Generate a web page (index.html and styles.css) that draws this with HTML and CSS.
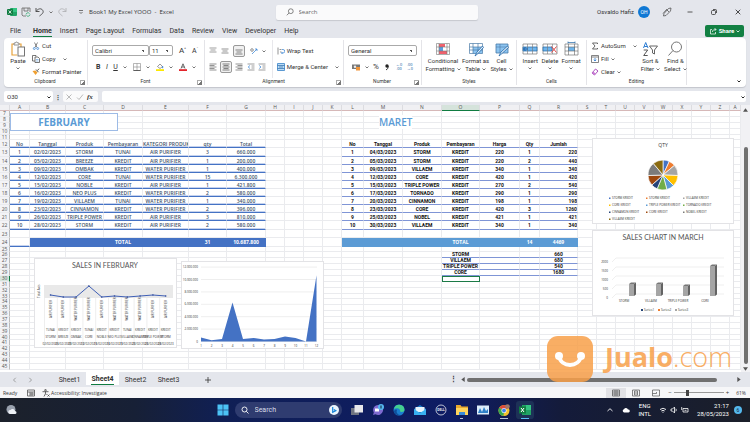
FILE: index.html
```html
<!DOCTYPE html>
<html lang="en">
<head>
<meta charset="utf-8">
<title>Book1 My Excel YOOO - Excel</title>
<link rel="stylesheet" href="styles.css">
</head>
<body>
<header class="titlebar">
  <div class="quick">
    <svg class="i10" viewBox="0 0 10 10"><rect x="3" y="1" width="7" height="8" rx="1" fill="#21a366"/><path d="M6 1h4v4H6z" fill="#33c481"/><rect y="2" width="6" height="6" rx="1" fill="#107c41"/><path d="M1.700 3.500l2.600 3M4.300 3.500l-2.600 3" stroke="#fff" stroke-width=".8"/></svg>
    <button class="icon" aria-label="Save"><svg class="i10" viewBox="0 0 10 10" fill="none" stroke="#666" stroke-width=".8"><path d="M5 9H2L1 8V1h8v4M3 1v3h4V1"/><path d="M5 7.500a2 2 0 0 1 3.500-1M9 7.500a2 2 0 0 1-3.500 1" stroke="#21a366"/></svg></button>
    <button class="icon" aria-label="Undo"><svg class="i10" viewBox="0 0 10 10" fill="none" stroke="#444" stroke-width=".9"><path d="M1 1v3.500h3.500M1 4.500C3 1.500 6 1 7.500 3s.5 3.500-3 6"/></svg></button>
    <svg class="chev" viewBox="0 0 4 4"><path d="M.5 1.500L2 3l1.500-1.500"/></svg>
    <button class="icon faded" aria-label="Redo"><svg class="i10" viewBox="0 0 10 10" fill="none" stroke="#777" stroke-width=".8"><path d="M9 1v3.500H5.500M9 4.500C7 1.500 4 1 2.500 3s-.5 3.500 3 6"/></svg></button>
    <button class="icon more" aria-label="Customize toolbar"><svg class="chev" viewBox="0 0 4 4"><path d="M0 .5h4M.5 2L2 3.500 3.500 2"/></svg></button>
    <span class="doc">Book1 My Excel YOOO&nbsp; -&nbsp; Excel</span>
  </div>
  <label class="search"><svg class="i8" viewBox="0 0 8 8" fill="none" stroke="#555" stroke-width=".7"><circle cx="4.800" cy="3.200" r="2.400"/><path d="M3 5L.8 7.300"/></svg><input type="text" placeholder="Search" aria-label="Search"></label>
  <div class="user">
    <span>Osvaldo Hafiz</span><span class="avatar">OH</span>
    <button class="icon" aria-label="Pen"><svg class="i10" viewBox="0 0 10 10" fill="none" stroke="#444" stroke-width=".7"><path d="M6.500 1.500L9 1 8.500 4 4 8.500l-2.500.5.500-2.500zM5 3l2 2M1 6.500L5 2"/></svg></button>
    <button class="icon" aria-label="Minimize"><svg class="i8" viewBox="0 0 8 8" stroke="#333" stroke-width=".8"><path d="M1.500 4h5"/></svg></button>
    <button class="icon" aria-label="Restore"><svg class="i8" viewBox="0 0 8 8" fill="none" stroke="#333" stroke-width=".8"><rect x="1.500" y="2.500" width="4" height="4" rx="1"/><path d="M3 1.500h2.500a1 1 0 0 1 1 1V5"/></svg></button>
    <button class="icon" aria-label="Close"><svg class="i8" viewBox="0 0 8 8" stroke="#222" stroke-width=".8"><path d="M1.700 1.700l4.600 4.600M6.300 1.700L1.700 6.300"/></svg></button>
  </div>
</header>

<nav class="tabs">
  <button>File</button><button class="on">Home</button><button>Insert</button><button>Page Layout</button><button>Formulas</button><button>Data</button><button>Review</button><button>View</button><button>Developer</button><button>Help</button>
  <button class="share"><svg class="i8" viewBox="0 0 8 8" fill="none" stroke="#fff" stroke-width=".7"><path d="M3 2.500H1.500v4.500h5V5M3.500 5c0-2 1-2.500 3.500-2.500M5.500 1L7 2.500 5.500 4"/></svg>Share <svg class="chev light" viewBox="0 0 4 4"><path d="M.5 1.500L2 3l1.500-1.500"/></svg></button>
</nav>

<section class="ribbon">
  <div class="group g-clip">
    <div class="body">
      <button class="big"><svg class="i16" viewBox="0 0 16 16" fill="none"><path d="M4 3H2v11h5M9 3h2v3" stroke="#e8a33d" stroke-width="1.200"/><path d="M4 4V2h1.500a1 1 0 0 1 2 0H9v2z" fill="#fff" stroke="#777" stroke-width=".8"/><rect x="8" y="6" width="6.500" height="9" fill="#fff" stroke="#666" stroke-width=".9"/></svg><span>Paste</span><svg class="chev" viewBox="0 0 4 4"><path d="M.5 1.500L2 3l1.500-1.500"/></svg></button>
      <div class="stack">
        <button class="row"><svg class="i8" viewBox="0 0 8 8" fill="none" stroke="#555" stroke-width=".7"><path d="M2.500.5L5 5.500M5.500.5L3 5.500"/><circle cx="2.300" cy="6.500" r="1" stroke="#2b7cd3"/><circle cx="5.700" cy="6.500" r="1" stroke="#2b7cd3"/></svg>Cut</button>
        <button class="row"><svg class="i8" viewBox="0 0 8 8" fill="none" stroke="#555" stroke-width=".8"><path d="M3 6H.5V.5H4v1M3 2h3l1.500 1.500v4H3z"/><path d="M4 4.500h2.500M4 6h2.500" stroke="#2b7cd3" stroke-width=".5"/></svg>Copy<svg class="chev pad" viewBox="0 0 4 4"><path d="M.5 1.500L2 3l1.500-1.500"/></svg></button>
        <button class="row"><svg class="i8" viewBox="0 0 8 8"><path d="M.5 3l3 4 2-2.500-2-2z" fill="#f0a030"/><path d="M4 1.500l2.500 2.700M5.500 2.500L7 .7" stroke="#555" stroke-width="1" fill="none"/></svg>Format Painter</button>
      </div>
    </div>
    <div class="label launch">Clipboard</div>
  </div>
  <div class="group g-font">
    <div class="body lines">
      <div class="line">
        <select class="w-font" aria-label="Font"><option>Calibri</option></select><select class="w-size" aria-label="Font size"><option>11</option></select>
        <button class="icon big-a">A<sup>^</sup></button><button class="icon small-a">A<sup>ˇ</sup></button>
      </div>
      <div class="line spread">
        <button class="icon fmt"><b>B</b></button><button class="icon fmt"><i>I</i></button><button class="icon fmt"><u>U</u></button><svg class="chev" viewBox="0 0 4 4"><path d="M.5 1.500L2 3l1.500-1.500"/></svg>
        <button class="icon" aria-label="Borders"><svg class="i8" viewBox="0 0 8 8" fill="none" stroke="#888" stroke-width=".6"><path d="M.5.5h7v7h-7zM4 .5v7M.5 4h7"/><path d="M.5 7.500h7" stroke="#222"/></svg></button><svg class="chev" viewBox="0 0 4 4"><path d="M.5 1.500L2 3l1.500-1.500"/></svg>
        <button class="icon" aria-label="Fill color"><svg class="i8" viewBox="0 0 8 8"><path d="M1.500 3.500L4 1l2.500 2.500-2.500 2z" fill="#fff" stroke="#555" stroke-width=".6"/><path d="M6.700 3.200v2" stroke="#2b7cd3"/><path d="M0 6.200h8V8H0z" fill="#fde900"/></svg></button><svg class="chev" viewBox="0 0 4 4"><path d="M.5 1.500L2 3l1.500-1.500"/></svg>
        <button class="icon" aria-label="Font color"><svg class="i8" viewBox="0 0 8 8"><path d="M2 5.500L4 .8l2 4.700M2.700 4h2.600" fill="none" stroke="#444" stroke-width=".8"/><path d="M0 6.200h8V8H0z" fill="#e3242b"/></svg></button><svg class="chev" viewBox="0 0 4 4"><path d="M.5 1.500L2 3l1.500-1.500"/></svg>
      </div>
    </div>
    <div class="label launch">Font</div>
  </div>
  <div class="group g-align">
    <div class="body">
      <div class="lines cols">
        <div class="line spread">
          <button class="icon" aria-label="Top align"><svg class="i8" viewBox="0 0 8 8" stroke="#777" stroke-width=".7"><path d="M.5 1h7M1.500 3h5M.5 5h7"/></svg></button>
          <button class="icon" aria-label="Middle align"><svg class="i8" viewBox="0 0 8 8" stroke="#666" stroke-width=".7"><path d="M.5 2h7M1.500 4h5M.5 6h7"/></svg></button>
          <button class="icon sel" aria-label="Bottom align"><svg class="i8" viewBox="0 0 8 8" stroke="#555" stroke-width=".7"><path d="M.5 3h7M1.500 5h5M.5 7h7"/></svg></button>
          <button class="icon" aria-label="Orientation"><svg class="i8" viewBox="0 0 8 8" fill="none" stroke="#666" stroke-width=".7"><circle cx="2" cy="3" r="1.300"/><path d="M2 7l5-5M7 4V2H5" stroke="#2b7cd3"/></svg></button>
          <svg class="chev" viewBox="0 0 4 4"><path d="M.5 1.500L2 3l1.500-1.500"/></svg>
        </div>
        <div class="line spread">
          <button class="icon" aria-label="Align left"><svg class="i8" viewBox="0 0 8 8" stroke="#666" stroke-width=".7"><path d="M.5 1h7M.5 2.500h5M.5 4h7M.5 5.500h5M.5 7h7"/></svg></button>
          <button class="icon sel" aria-label="Center"><svg class="i8" viewBox="0 0 8 8" stroke="#555" stroke-width=".7"><path d="M.5 1h7M1.500 2.500h5M.5 4h7M1.500 5.500h5M.5 7h7"/></svg></button>
          <button class="icon" aria-label="Align right"><svg class="i8" viewBox="0 0 8 8" stroke="#666" stroke-width=".7"><path d="M.5 1h7M2.500 2.500h5M.5 4h7M2.500 5.500h5M.5 7h7"/></svg></button>
          <button class="icon" aria-label="Decrease indent"><svg class="i8" viewBox="0 0 8 8" fill="none" stroke="#777" stroke-width=".7"><path d="M.5 1h7M4.500 3h3M4.500 5h3M.5 7h7"/><path d="M3 2.500L1.200 4 3 5.500" stroke="#2b7cd3"/></svg></button>
          <button class="icon" aria-label="Increase indent"><svg class="i8" viewBox="0 0 8 8" fill="none" stroke="#777" stroke-width=".7"><path d="M.5 1h7M4.500 3h3M4.500 5h3M.5 7h7"/><path d="M1.200 2.500L3 4 1.200 5.500" stroke="#2b7cd3"/></svg></button>
        </div>
      </div>
      <div class="lines wrapcol">
        <button class="row"><svg class="i8" viewBox="0 0 8 8" fill="none" stroke="#666" stroke-width=".7"><path d="M1 .5v7M2.500 2.500h2M3 5h1.500"/><path d="M5 2.500h1a1.500 1.500 0 0 1 0 3.500H4.500M5.500 5l-1 1 1 1" stroke="#2b7cd3"/></svg>Wrap Text</button>
        <button class="row"><svg class="i8" viewBox="0 0 8 8" fill="none"><path d="M.5.5h7v7h-7z" fill="#bcdcf5" stroke="#3a83c8" stroke-width=".8"/><path d="M.5 2.500h7M.5 5.500h7M2 4h4" stroke="#2b6cab" stroke-width=".7"/></svg>Merge &amp; Center<svg class="chev pad" viewBox="0 0 4 4"><path d="M.5 1.500L2 3l1.500-1.500"/></svg></button>
      </div>
    </div>
    <div class="label launch">Alignment</div>
  </div>
  <div class="group g-num">
    <div class="body lines">
      <div class="line"><select class="w-num" aria-label="Number format"><option>General</option></select></div>
      <div class="line spread">
        <button class="icon" aria-label="Accounting"><svg class="i8" viewBox="0 0 8 8"><path d="M0 1.500h8v4.500H0z" fill="#777"/><circle cx="3" cy="3.700" r="1.200" fill="#eee"/><path d="M4 4h4v3.500H4z" fill="#f0953a"/></svg></button><svg class="chev" viewBox="0 0 4 4"><path d="M.5 1.500L2 3l1.500-1.500"/></svg>
        <button class="icon pct">%</button><button class="icon comma" aria-label="Comma style"><svg class="i8" viewBox="0 0 8 8"><circle cx="4" cy="3" r="1.700" fill="#222"/><path d="M5.300 3.200Q5.300 6 3 7" fill="none" stroke="#222" stroke-width=".9"/></svg></button>
        <button class="icon dec">←0<br>.00</button><button class="icon dec">.00<br>→0</button>
      </div>
    </div>
    <div class="label launch">Number</div>
  </div>
  <div class="group g-style">
    <div class="body center">
      <button class="big"><svg class="i16" viewBox="0 0 16 16" fill="none"><path d="M1.500 2.500h13v11h-13z" fill="#fff"/><path d="M4 3h6v3H4zM4 10h8v3H4z" fill="#f0616d"/><path d="M4 6h4v4H4z" fill="#5b9fe0"/><path d="M1.500 2.500h13v11h-13zM1.500 6h13M1.500 10h13M4 2.500v11M12 2.500v11" stroke="#777" stroke-width=".6"/></svg><span>Conditional<br>Formatting<svg class="chev" viewBox="0 0 4 4"><path d="M.5 1.500L2 3l1.500-1.500"/></svg></span></button>
      <button class="big"><svg class="i16" viewBox="0 0 16 16" fill="none"><path d="M1.500 2.500h13v10h-13z" fill="#fff"/><path d="M5 6h9.500v6.500H5z" fill="#8cc4f0"/><path d="M1.500 2.500h13v10h-13zM1.500 6h13M1.500 9h13M5 2.500v10M10 2.500v10" stroke="#4a7ba8" stroke-width=".7"/><path d="M7 15l2-4 5.500-6 1 1.500-5.500 6z" fill="#dcecf8" stroke="#2468a8" stroke-width=".8"/></svg><span>Format as<br>Table<svg class="chev" viewBox="0 0 4 4"><path d="M.5 1.500L2 3l1.500-1.500"/></svg></span></button>
      <button class="big"><svg class="i16" viewBox="0 0 16 16" fill="none"><path d="M2 3h12v9H2z" fill="#8cc4f0" stroke="#4a7ba8" stroke-width=".8"/><path d="M2 6h12M6 3v9" stroke="#4a7ba8" stroke-width=".6"/><path d="M5 15l2-4 6.500-6 1 1.500-6.500 6z" fill="#dcecf8" stroke="#2468a8" stroke-width=".8"/></svg><span>Cell<br>Styles<svg class="chev" viewBox="0 0 4 4"><path d="M.5 1.500L2 3l1.500-1.500"/></svg></span></button>
    </div>
    <div class="label">Styles</div>
  </div>
  <div class="group g-cells">
    <div class="body center">
      <button class="big"><svg class="i16" viewBox="0 0 16 16" fill="none"><path d="M1 3h14v10H1z" fill="#fff" stroke="#777" stroke-width=".7"/><path d="M1 6h14v4H1z" fill="#6fb5ec" stroke="#2468a8" stroke-width=".7"/><path d="M5.500 3v10M10.500 3v10" stroke="#777" stroke-width=".6"/><path d="M6 8H1.500M3.500 6L1.500 8l2 2" stroke="#1d5fa5"/></svg><span>Insert</span><svg class="chev" viewBox="0 0 4 4"><path d="M.5 1.500L2 3l1.500-1.500"/></svg></button>
      <button class="big"><svg class="i16" viewBox="0 0 16 16" fill="none"><path d="M1 3h14v10H1z" fill="#fff" stroke="#777" stroke-width=".7"/><path d="M1 6h9v4H1z" fill="#6fb5ec" stroke="#2468a8" stroke-width=".7"/><path d="M5.500 3v10M10.500 3v10" stroke="#777" stroke-width=".6"/><path d="M9.500 5.500l5 6M14.500 5.500l-5 6" stroke="#e04848"/></svg><span>Delete</span><svg class="chev" viewBox="0 0 4 4"><path d="M.5 1.500L2 3l1.500-1.500"/></svg></button>
      <button class="big"><svg class="i16" viewBox="0 0 16 16" fill="none"><path d="M2 3h13v11H2z" fill="#fff" stroke="#777" stroke-width=".7"/><path d="M5 6h7v4H5z" fill="#6fb5ec"/><path d="M5.500 3v11M11.500 3v11M2 6h13M2 10h13" stroke="#666" stroke-width=".6"/><path d="M5 1.500h7M5 .5v2M12 .5v2" stroke="#2468a8" stroke-width=".7"/></svg><span>Format</span><svg class="chev" viewBox="0 0 4 4"><path d="M.5 1.500L2 3l1.500-1.500"/></svg></button>
    </div>
    <div class="label">Cells</div>
  </div>
  <div class="group g-edit">
    <div class="body">
      <div class="stack">
        <button class="row"><svg class="i8" viewBox="0 0 8 8" fill="none" stroke="#444" stroke-width=".8"><path d="M6.500 2V1h-5L4 4 1.500 7h5V6"/></svg>AutoSum<svg class="chev pad" viewBox="0 0 4 4"><path d="M.5 1.500L2 3l1.500-1.500"/></svg></button>
        <button class="row"><svg class="i8" viewBox="0 0 8 8" fill="none" stroke="#666" stroke-width=".8"><path d="M.5.5h7v7h-7zM.5 2h7"/><path d="M4 3v3M2.700 4.800L4 6l1.300-1.200" stroke="#2b7cd3"/></svg>Fill<svg class="chev" viewBox="0 0 4 4"><path d="M.5 1.500L2 3l1.500-1.500"/></svg></button>
        <button class="row"><svg class="i8" viewBox="0 0 8 8"><path d="M1 5l3.500-4L7 3 3.500 7z" fill="#fff" stroke="#a33bb5" stroke-width=".9"/><path d="M1 5l1.200-1.500L4.700 5.500 3.500 7z" fill="#c77dd4"/></svg>Clear<svg class="chev" viewBox="0 0 4 4"><path d="M.5 1.500L2 3l1.500-1.500"/></svg></button>
      </div>
      <button class="big"><svg class="i16" viewBox="0 0 16 16" fill="none"><path d="M1.500 7L3.700 1.500 6 7M2.300 5.500h3" stroke="#2b7cd3"/><path d="M1.700 9h4l-4 5.500h4" stroke="#555"/><path d="M7.500 5h8l-3 4v4l-2-1V9z" stroke="#555" stroke-width=".9"/></svg><span>Sort &amp;<br>Filter<svg class="chev" viewBox="0 0 4 4"><path d="M.5 1.500L2 3l1.500-1.500"/></svg></span></button>
      <button class="big"><svg class="i16" viewBox="0 0 16 16" fill="none" stroke="#666" stroke-width=".9"><circle cx="9.500" cy="6" r="5"/><path d="M6 9.500L1.500 14.500"/></svg><span>Find &amp;<br>Select<svg class="chev" viewBox="0 0 4 4"><path d="M.5 1.500L2 3l1.500-1.500"/></svg></span></button>
    </div>
    <div class="label">Editing</div>
  </div>
  <button class="icon collapse" aria-label="Collapse ribbon"><svg class="chev bold" viewBox="0 0 4 4"><path d="M.5 1.500L2 3l1.500-1.500"/></svg></button>
</section>

<section class="formula">
  <div class="namebox"><input type="text" value="O30" aria-label="Name box"><svg class="chev bold" viewBox="0 0 4 4"><path d="M.5 1.500L2 3l1.500-1.500"/></svg></div>
  <span class="dots">⋮</span>
  <div class="fx"><svg class="i8" viewBox="0 0 8 8" stroke="#aaa" stroke-width=".8"><path d="M1.500 1.500l5 5M6.500 1.500l-5 5"/></svg><svg class="i8" viewBox="0 0 8 8" fill="none" stroke="#aaa" stroke-width=".8"><path d="M1 4.500L3 6.500l4-5"/></svg><i>fx</i></div>
  <div class="entry"><input type="text" aria-label="Formula"><svg class="chev bold" viewBox="0 0 4 4"><path d="M.5 1.500L2 3l1.500-1.500"/></svg></div>
</section>

<main class="work">
  <div class="sheet">
    <table class="grid"><colgroup id="cols"></colgroup><thead id="head"></thead><tbody id="rows"></tbody></table>
    <div class="shape february">FEBRUARY</div>
    <div class="shape maret">MARET</div>
    <figure class="chart c-feb"><svg id="feb" viewBox="0 0 143 90"></svg></figure>
    <figure class="chart c-area"><svg id="area" viewBox="0 0 143 88"></svg></figure>
    <figure class="chart c-qty"><svg id="qty" viewBox="0 0 142 86"></svg></figure>
    <figure class="chart c-mar"><svg id="mar" viewBox="0 0 142 86"></svg></figure>
  </div>
  <div class="vscroll"><svg viewBox="0 0 6 4"><path d="M3 0l3 4H0z"/></svg><span class="thumb"></span><svg viewBox="0 0 6 4"><path d="M3 4l3-4H0z"/></svg></div>
</main>

<div class="sheetbar">
  <div class="arrows"><button class="icon" aria-label="Previous sheet"><svg class="chev grey" viewBox="0 0 4 4"><path d="M2.500.5L1 2l1.500 1.500"/></svg></button><button class="icon" aria-label="Next sheet"><svg class="chev grey" viewBox="0 0 4 4"><path d="M1.500.5L3 2 1.500 3.500"/></svg></button></div>
  <button>Sheet1</button><button class="on"><span>Sheet4</span></button><button>Sheet2</button><button>Sheet3</button><button class="plus" aria-label="New sheet"><svg class="i8" viewBox="0 0 8 8" stroke="#333" stroke-width=".8"><path d="M4 1v6M1 4h6"/></svg></button>
  <div class="hscroll"><span class="dots">⋮</span><svg viewBox="0 0 4 6"><path d="M0 3l4-3v6z"/></svg><span class="thumb"></span><svg viewBox="0 0 4 6"><path d="M4 3L0 0v6z"/></svg></div>
</div>

<div class="status">
  <span class="ready">Ready</span>
  <svg class="i8" viewBox="0 0 8 8" fill="none" stroke="#555" stroke-width=".8"><path d="M.5 1h7v6h-7zM.5 3h7M3 3v4M5 3v4M3 5h4"/></svg>
  <span class="access"><svg class="i8" viewBox="0 0 8 8" fill="none" stroke="#444" stroke-width=".8"><circle cx="3.500" cy="1.200" r=".8"/><path d="M.5 2.700h6M3.500 2.700v2L2 7.500M3.500 4.700l1 1M5.500 5.500l2 2M7.500 5.500l-2 2"/></svg>Accessibility: Investigate</span>
  <div class="views">
    <button class="icon on" aria-label="Normal"><svg class="i8" viewBox="0 0 8 8" fill="none" stroke="#555" stroke-width=".7"><path d="M.5 1h7v6h-7zM.5 3h7M.5 5h7M3 1v6M5 1v6"/></svg></button>
    <button class="icon" aria-label="Page layout"><svg class="i8" viewBox="0 0 8 8" fill="none" stroke="#555" stroke-width=".7"><path d="M.5 1h7v6h-7zM2.500 2h3v4h-3zM2.500 4h3"/></svg></button>
    <button class="icon" aria-label="Page break"><svg class="i8" viewBox="0 0 8 8" fill="none" stroke="#555" stroke-width=".7"><path d="M.5 1h7v6h-7zM.5 4.500h4V3"/></svg></button>
  </div>
  <div class="zoom"><span>−</span><input type="range" min="0" max="100" value="26" aria-label="Zoom"><span>+</span></div>
  <span class="pct61">61%</span>
</div>

<footer class="taskbar">
  <div class="side"><svg class="i12" viewBox="0 0 12 12"><circle cx="6" cy="5.500" r="4.500" fill="#9aa2ae"/><path d="M5 10a2 2 0 0 1 .5-4 2.500 2.500 0 0 1 4.500 1 1.500 1.500 0 0 1 0 3z" fill="#eef1f6"/></svg></div>
  <div class="apps">
    <svg class="i12" viewBox="0 0 12 12"><path d="M.5.500h5.200v5.200H.5zM6.300.500h5.200v5.200H6.300zM.5 6.300h5.200v5.200H.5zM6.300 6.300h5.200v5.200H6.300z" fill="#4cc2f5"/></svg>
    <label class="find"><svg class="i8" viewBox="0 0 8 8" fill="none" stroke="#fff" stroke-width=".9"><circle cx="3.500" cy="3.500" r="2.500"/><path d="M5.300 5.300L7.500 7.500"/></svg><input type="text" placeholder="Search" aria-label="Search Windows"><svg class="i10" viewBox="0 0 10 10"><circle cx="5" cy="5" r="5" fill="#e9f5fd"/><path d="M3.700 2v5.300L6.800 5.700 4.800 4.500" fill="none" stroke="#1583d8" stroke-width="1.200"/></svg></label>
    <svg class="i12" viewBox="0 0 12 12"><path d="M0 4h8v7H0z" fill="#6f7480"/><path d="M3.500 1H12v7.500H3.500z" fill="#e8e8ea"/></svg>
    <svg class="i12" viewBox="0 0 12 12"><path d="M6 1a5 5 0 1 1-2.500 9.300L1 11l.8-2.500A5 5 0 0 1 6 1z" fill="#7f6bd0"/><path d="M3 4.500h4v3H3z" fill="#fff"/><circle cx="9" cy="3" r="3" fill="#55b8f0"/><path d="M9 1.500v3" stroke="#123"/></svg>
    <svg class="i12" viewBox="0 0 12 12"><circle cx="6" cy="6" r="5.500" fill="#1b7fd0"/><path d="M1 5a5.300 5.300 0 0 1 10.500 1c0 2-3 2.500-4.500 1.500C8 5 4 3 1 5z" fill="#45cf8f"/><path d="M4 6c-1 2 0 5 3.500 5A5 5 0 0 1 1 8c0-2 1.500-3 3-2z" fill="#0f4f9c"/></svg>
    <svg class="i12" viewBox="0 0 12 12"><path d="M0 5l6-4 6 4v6H0z" fill="#1a78c8"/><path d="M1.500 3h9v5h-9z" fill="#e8f4fc"/><path d="M0 5l6 4 6-4v6H0z" fill="#38b0f2"/></svg>
    <svg class="i12" viewBox="0 0 12 12"><circle cx="6" cy="6" r="5" fill="none" stroke="#e4e7ee" stroke-width=".8"/><text x="6" y="7.200" class="dell">DELL</text></svg>
    <span class="app"><svg class="i12" viewBox="0 0 12 12"><path d="M0 1h4.500l1 1.500H12V11H0z" fill="#e8a92f"/><path d="M0 4h12v7H0z" fill="#ffd45c"/><path d="M3 8h6v3H3z" fill="#3b8bd8"/></svg></span>
    <svg class="i12" viewBox="0 0 12 12"><path d="M0 1.500h12v9H0z" fill="#dcecf9"/><path d="M1 9l2-5 2 4 2-5 2 4 2-2v4z" fill="#2f80c8"/></svg>
    <span class="app open"><svg class="i12" viewBox="0 0 12 12"><circle cx="6" cy="6.500" r="5.500" fill="#f2c22f"/><path d="M6 6.500L1.200 3.800A5.500 5.500 0 0 1 10.800 3.800z" fill="#e04a3a"/><path d="M6 6.500L1.200 3.800A5.500 5.500 0 0 0 5.500 12z" fill="#35a853"/><circle cx="6" cy="6.500" r="2.500" fill="#fff"/><circle cx="6" cy="6.500" r="1.900" fill="#3f7fe8"/><circle cx="9.500" cy="2.500" r="2.300" fill="#a0776a"/></svg></span>
    <span class="app open lit"><svg class="i12" viewBox="0 0 12 12"><path d="M3 1h9v10H3z" fill="#21a366"/><path d="M7 1h5v5H7z" fill="#33c481"/><path d="M0 2.500h7v7H0z" fill="#107c41"/><path d="M2 4l3 4M5 4L2 8" stroke="#fff"/></svg></span>
  </div>
  <div class="side tray">
    <svg class="i8" viewBox="0 0 8 8" fill="none" stroke="#fff" stroke-width=".9"><path d="M1.500 5L4 2.700 6.500 5"/></svg>
    <svg class="i8" viewBox="0 0 8 8"><path d="M2 6.500A1.700 1.700 0 0 1 2 3.200a2.200 2.200 0 0 1 4 .3 1.500 1.500 0 0 1 .5 3z" fill="#fff"/></svg>
    <span class="lang">ENG<br>INTL</span>
    <span class="net"><svg class="i8" viewBox="0 0 8 8" fill="none" stroke="#fff" stroke-width=".9"><path d="M1 3.500q3-2.500 6 0M2.300 5q1.700-1.300 3.400 0"/><path d="M4 5.800v1"/></svg><svg class="i8" viewBox="0 0 8 8" fill="none" stroke="#fff" stroke-width=".8"><path d="M1 3h1.500L4.500 1v6L2.500 5H1zM5.800 2.700q1 1.300 0 2.600"/></svg><svg class="i8" viewBox="0 0 8 8" fill="none" stroke="#fff" stroke-width=".8"><path d="M2 2.500h5v3.500H2zM.7 1v3M3.500 4.300h2"/></svg></span>
    <span class="clock">21:17<br>28/05/2023</span>
    <span class="badge">6</span>
  </div>
</footer>

<div class="watermark"><svg viewBox="0 0 46 46"><rect width="46" height="46" rx="11"/><path d="M12 20c2 12 20 12 22 0" fill="none" stroke="#fff" stroke-width="4"/><circle cx="12" cy="20" r="4" fill="#fff"/><circle cx="34" cy="20" r="4" fill="#fff"/></svg><span><b>Jualo</b>.com</span></div>
<script src="script.js"></script>
</body>
</html>
```
FILE: styles.css
```css
* { box-sizing: border-box; }
body {
  margin: 0; height: 100vh; display: flex; flex-direction: column; overflow: hidden;
  background: #e4e6ec; color: #333; font: 6px/8px Roboto, "Open Sans", sans-serif; position: relative;
}
button, input, select { font: inherit; color: inherit; border: 0; background: none; padding: 0; margin: 0; }
input { min-width: 0; outline: 0; }
svg { display: block; flex: none; }
.i8 { width: 8px; height: 8px; }
.i10 { width: 10px; height: 10px; }
.i12 { width: 12px; height: 12px; }
.i16 { width: 16px; height: 16px; }
.icon { display: flex; align-items: center; justify-content: center; flex: none; }
.chev { width: 4px; height: 4px; fill: none; stroke: #555; stroke-width: .8; }
.chev.light { stroke: #fff; }
.chev.bold { stroke: #222; stroke-width: 1; }
.chev.grey { width: 6px; height: 8px; stroke: #888; stroke-width: .5; }
.chev.pad { margin-left: 5px; }
.faded { opacity: .5; }

.titlebar { display: flex; align-items: center; height: 24px; flex: none; padding: 0 8px 0 7px; }
.quick { display: flex; align-items: center; gap: 4px; flex: 1; }
.quick .more { margin: 0 2px 0 8px; }
.doc { font-family: "Open Sans", sans-serif; }
.search { display: flex; align-items: center; gap: 5px; width: 202px; height: 15px; padding-left: 10px; margin-left: 4px; background: #fafafb; border-radius: 2px; box-shadow: 0 1px 1px #c6c8cf; }
.search input { flex: 1; font-family: "Open Sans", sans-serif; }
.search input::placeholder { color: #666; opacity: 1; }
.user { display: flex; align-items: center; justify-content: flex-end; flex: 1; gap: 16px; }
.user .avatar { width: 12px; height: 12px; border-radius: 50%; background: #0f78d4; color: #fff; font-size: 5px; line-height: 12px; text-align: center; margin-left: -12px; }
.user .icon:nth-of-type(1) { margin-right: -2px; margin-left: -4px; }

.tabs { display: flex; align-items: center; height: 14px; flex: none; gap: 8px; padding: 0 6px 0 10px; font-size: 7px; }
.tabs button { height: 12px; border-bottom: 1px solid transparent; }
.tabs button:first-child { margin-right: 4px; }
.tabs .on { font-weight: 700; border-color: #107c41; }
.tabs .share { display: flex; align-items: center; justify-content: center; gap: 2px; width: 39px; margin-left: auto; background: #128043; color: #fff; border: 0; border-radius: 2px; font-size: 6px; font-weight: 700; }

.ribbon { display: flex; height: 49px; flex: none; margin: 0 4px; background: #fff; border-radius: 4px; box-shadow: 0 1px 1px #c3c5cc; }
.group { display: flex; flex-direction: column; flex: none; border-right: 1px solid #e4e4e8; margin: 2px 0; }
.body { display: flex; flex: 1; gap: 4px; padding: 0 4px; }
.body.center { justify-content: space-evenly; gap: 0; padding: 0 2px; }
.label { font-size: 5px; line-height: 7px; text-align: center; }
.launch::after { content: ""; float: right; width: 4px; height: 4px; margin: 2px 2px 0 -6px; border: 1px solid #aaa; border-width: 1px 0 0 1px; background: linear-gradient(135deg, transparent 50%, #777 50%); }
.g-clip { width: 84px; }
.g-font { width: 117px; }
.g-align { width: 139px; }
.g-num { width: 78px; }
.g-style { width: 95px; }
.g-cells { width: 70px; }
.g-edit { width: 100px; }
.big { display: flex; flex-direction: column; align-items: center; justify-content: flex-start; padding-top: 1px; white-space: nowrap; flex: none; }
.big span .chev { display: inline-block; margin-left: 2px; }
.big > .chev { margin-top: 1px; }
.g-clip .big { width: 20px; }
.stack { display: flex; flex-direction: column; justify-content: space-around; }
.row { display: flex; align-items: center; gap: 2px; white-space: nowrap; }
.lines { display: flex; flex-direction: column; justify-content: space-evenly; gap: 0; }
.line { display: flex; align-items: center; height: 12px; }
.spread { justify-content: space-between; padding: 0 4px; }
.cols { width: 64px; }
.cols .spread { padding: 0 2px 0 0; }
.wrapcol { border-left: 1px solid #e8e8ec; padding-left: 4px; align-items: flex-start; }
.sel { width: 12px; height: 12px; border: 1px solid #999; border-radius: 2px; background: #f0f0f0; }
select { appearance: none; height: 11px; border: 1px solid #aaa; border-radius: 2px; padding: 0 2px; background: linear-gradient(45deg, transparent 50%, #555 50%) right 4px center / 2px 2px no-repeat; }
.w-font { width: 57px; }
.w-size { width: 24px; }
.w-num { width: 70px; }
.fmt { font-size: 7px; }
.big-a { font-size: 8px; margin-left: 6px; }
.small-a { font-size: 7px; margin-left: 6px; }
sup { font-size: 4px; line-height: 4px; align-self: flex-start; }
.pct { font-size: 8px; }
.dec { font-size: 4px; line-height: 4px; color: #2b6cab; }
.g-style .chev, .g-edit span .chev { vertical-align: middle; }
.collapse { margin: auto 5px 4px auto; }

.formula { display: flex; height: 11px; flex: none; margin: 4px 4px 3px; }
.namebox { display: flex; align-items: center; width: 49px; padding: 0 2px 0 3px; background: #fff; border-radius: 2px; }
.namebox input { width: 100%; }
.dots { width: 10px; text-align: center; font-weight: 700; line-height: 11px; }
.fx { display: flex; align-items: center; gap: 3px; width: 35px; padding: 0 2px; background: #fafafb; border-radius: 2px; }
.fx i { font: italic 700 7px/10px "Liberation Serif", serif; }
.entry { display: flex; align-items: center; flex: 1; margin-left: 4px; padding-right: 1px; background: #fff; border-radius: 2px; }
.entry input { flex: 1; }

.work { display: flex; flex: 1; min-height: 0; }
.sheet { position: relative; flex: 1; overflow: hidden; background: #fff; }
.grid { width: 100%; table-layout: fixed; border-collapse: separate; border-spacing: 0; font: 5px/5px "Open Sans", sans-serif; }
.grid td, .grid th { padding: 0; height: 6px; text-align: center; font-weight: 600; white-space: nowrap; border-right: 1px solid #eaebee; border-bottom: 1px solid #eaebee; }
.grid td { overflow: hidden; }
.grid thead th { font-weight: 400; color: #555; background: #f0f0f3; border-bottom-color: #d6b8b8; border-right-color: #dcdce0; }
.grid thead th.cur { background: #d5e3db; border-bottom-color: #107c41; }
.grid tbody th { font-weight: 400; color: #555; background: #f3f3f6; border-right-color: #bbb; }
.grid tbody th.cur { background: #d5e3db; border-right-color: #107c41; }
.grid .low td, .grid .low th { height: 5px; line-height: 4px; }
.grid .mid td, .grid .mid th { height: 8px; padding-top: 1px; }
.grid .tall td, .grid .tall th { height: 9px; padding-top: 1px; }
.grid .feb { color: #44546a; border-bottom-color: #4472c4; box-shadow: inset 0 -1px #c5d2ee; }
.grid .mar { color: #111; border-bottom-color: #7f95d6; font-family: Roboto, sans-serif; font-weight: 700; }
.grid .right { text-align: right; }
.grid .tfeb { background: #4472c4; color: #fff; border-color: #4472c4; font-weight: 700; }
.grid .tmar { background: #5b9bd5; color: #fff; border-color: #5b9bd5; font-weight: 700; }
.grid td.cursor { border: 1px solid #1c7a47; }
.shape { position: absolute; background: #fff; color: #5b9bd5; white-space: nowrap; }
.february { left: 10px; top: 8px; width: 108px; height: 18px; border: 1px solid #9dbbe6; font: 700 10px/16px "Open Sans", sans-serif; text-align: center; }
.maret { left: 379px; top: 10px; font: 600 10px/14px "Open Sans", sans-serif; }
.chart { position: absolute; margin: 0; background: #fff; outline: 1px solid #e3e3e6; outline-offset: -1px; }
.chart svg { width: 100%; height: 100%; overflow: hidden; }
.chart text { font: 3px "Open Sans", sans-serif; fill: #333; text-anchor: middle; }
.chart text.title { font: 7px Lato, sans-serif; fill: #555; }
.chart text.qty { font-size: 5px; }
.chart text.start { text-anchor: start; }
.chart text.end { text-anchor: end; }
.c-feb { left: 34px; top: 153px; width: 143px; height: 90px; }
.c-area { left: 181px; top: 156px; width: 143px; height: 88px; }
.c-qty { left: 592px; top: 33px; width: 142px; height: 86px; }
.c-mar { left: 592px; top: 125px; width: 142px; height: 86px; }
.vscroll { display: flex; flex-direction: column; align-items: center; width: 9px; padding: 3px 0 1px; background: #f1f1f4; }
.vscroll svg { width: 5px; height: 4px; fill: #555; }
.vscroll .thumb { width: 4px; flex: 1; margin: 35px 0 3px; background: #707070; border-radius: 2px; }

.sheetbar { display: flex; align-items: center; height: 15px; flex: none; padding: 0 9px 0 12px; font-size: 7px; }
.sheetbar > button { width: 33px; height: 12px; }
.sheetbar .on { background: #fff; font-weight: 700; align-self: flex-start; height: 13px; }
.on span { border-bottom: 1px solid #107c41; padding-bottom: 1px; }
.arrows { display: flex; gap: 9px; width: 41px; }
.sheetbar .plus { display: flex; align-items: center; justify-content: center; margin-left: 3px; width: 40px; }
.hscroll { display: flex; align-items: center; width: 292px; margin-left: auto; }
.hscroll .dots { width: 8px; margin-right: 4px; }
.hscroll svg { width: 4px; height: 5px; fill: #555; }
.hscroll .thumb { flex: 1; height: 4px; margin: 0 20px 0 2px; background: #707070; border-radius: 2px; }

.status { display: flex; align-items: center; height: 11px; flex: none; padding: 0 4px 0 3px; background: #f6f6f8; font-size: 5px; font-family: "Open Sans", sans-serif; }
.ready { width: 24px; }
.access { display: flex; align-items: center; gap: 1px; margin-left: 7px; }
.views { display: flex; margin-left: auto; }
.views .icon { width: 20px; height: 10px; }
.views .on { background: #e2e2e6; }
.zoom { display: flex; align-items: center; gap: 2px; margin: 0 7px 0 2px; font-size: 6px; }
.zoom input { appearance: none; width: 50px; height: 8px; background: linear-gradient(#999, #999) center / 100% 1px no-repeat; }
.zoom input::-webkit-slider-thumb { appearance: none; width: 3px; height: 6px; background: #444; }

.taskbar { display: flex; align-items: center; height: 24px; flex: none; padding: 0 8px 0 5px; color: #fff; background: linear-gradient(90deg, #1c212b, #172036 18%, #101f55 30%, #0e1c64 60%, #141b3a 75%, #1b1f29); }
.side { flex: 1; }
.apps { display: flex; align-items: center; gap: 9px; }
.find { display: flex; align-items: center; gap: 6px; width: 107px; height: 16px; margin-left: -3px; padding: 0 3px 0 6px; border-radius: 8px; background: #2f3c70; }
.find input { flex: 1; font-size: 7px; }
.find input::placeholder { color: #d8dcea; opacity: 1; }
.app { display: flex; flex-direction: column; align-items: center; }
.app::after { content: ""; width: 3px; height: 1px; margin-bottom: -3px; margin-top: 2px; background: #b8c2d8; }
.open::after { width: 8px; }
.lit { background: #1d3157; box-shadow: 0 0 0 3px #1d3157; border-radius: 1px; }
.lit::after { background: #5bc0f5; }
.dell { font: 700 3px "Open Sans", sans-serif; fill: #fff; text-anchor: middle; }
.tray { display: flex; align-items: center; justify-content: flex-end; gap: 8px; }
.lang { text-align: center; }
.net { display: flex; gap: 3px; }
.clock { text-align: right; }
.badge { width: 8px; height: 8px; margin-left: -3px; border-radius: 50%; background: #55b9ee; color: #123; font-size: 5px; text-align: center; }

.watermark { position: absolute; right: 18px; bottom: 40px; display: flex; align-items: center; gap: 12px; opacity: .85; color: #f8a04a; }
.watermark svg { width: 46px; height: 46px; fill: #f8a04a; }
.watermark span { padding-bottom: 4px; font: 300 27px/38px "Open Sans", sans-serif; }
.watermark b { font-weight: 700; }
```
FILE: script.js
```js
const widths = [10, 20, 36, 38, 39, 46, 38, 39, 19, 19, 19, 19, 22, 39, 39, 38, 40, 20, 38, 19, 19, 19, 19, 19, 19, 19, 19];
const letters = 'ABCDEFGHIJKLMNOPQRSTUVWXYZ'.split('');

document.getElementById('cols').innerHTML = widths.map(w => `<col style="width:${w}px">`).join('') + '<col>';
document.getElementById('head').innerHTML = '<tr><th></th>' +
  letters.map(l => `<th class="${l === 'O' ? 'cur' : ''}">${l}</th>`).join('') + '<th>A</th></tr>';

const feb = [
  'No|Tanggal|Produk|Pembayaran|KATEGORI PRODUK|qty|Total',
  '1|02/02/2023|STORM|TUNAI|AIR PURIFIER|3|660.000',
  '2|05/02/2023|BREEZE|KREDIT|AIR PURIFIER|1|200.000',
  '3|09/02/2023|OMBAK|KREDIT|WATER PURIFIER|1|400.000',
  '4|12/02/2023|CORE|TUNAI|WATER PURIFIER|15|6.300.000',
  '5|15/02/2023|NOBLE|KREDIT|AIR PURIFIER|1|421.800',
  '6|16/02/2023|NEO PLUS|KREDIT|WATER PURIFIER|2|580.000',
  '7|19/02/2023|VILLAEM|TUNAI|WATER PURIFIER|1|340.000',
  '8|23/02/2023|CINNAMON|KREDIT|WATER PURIFIER|2|396.000',
  '9|26/02/2023|TRIPLE POWER|KREDIT|AIR PURIFIER|3|810.000',
  '10|28/02/2023|STORM|KREDIT|AIR PURIFIER|2|580.000'
].map(r => r.split('|'));
const mar = [
  'No|Tanggal|Produk|Pembayaran|Harga|Qty|Jumlah',
  '1|04/03/2023|STORM|KREDIT|220|1|220',
  '2|05/03/2023|STORM|KREDIT|220|2|440',
  '3|09/03/2023|VILLAEM|KREDIT|340|1|340',
  '4|12/03/2023|CORE|KREDIT|420|1|420',
  '5|15/03/2023|TRIPLE POWER|KREDIT|270|2|540',
  '6|17/03/2023|TORNADO|KREDIT|290|1|290',
  '7|20/03/2023|CINNAMON|KREDIT|198|1|198',
  '8|23/03/2023|CORE|KREDIT|420|3|1260',
  '9|25/03/2023|NOBEL|KREDIT|421|1|421',
  '10|30/03/2023|VILLAEM|KREDIT|340|1|340'
].map(r => r.split('|'));
const summary = { 26: ['STORM', '660'], 27: ['VILLAEM', '680'], 28: ['TRIPLE POWER', '540'], 29: ['CORE', '1680'] };
const totals = { D: 'TOTAL', F: '31', G: '10.687.800', O: 'TOTAL', Q: '14', R: '4469' };

function cell(row, i) {
  const l = letters[i];
  if (row >= 12 && row <= 22) {
    if (i < 7) return ['feb', feb[row - 12][i]];
    if (i > 10 && i < 18) return [l === 'R' && row > 12 ? 'mar right' : 'mar', mar[row - 12][i - 11]];
  }
  if (row === 24) {
    if (i === 0) return ['feb', ''];
    if (i < 7) return ['tfeb', totals[l] || ''];
    if (i > 10 && i < 18) return ['tmar', totals[l] || ''];
  }
  if (summary[row] && i > 13 && i < 18) return ['mar', l === 'O' ? summary[row][0] : l === 'R' ? summary[row][1] : ''];
  if (row === 30 && l === 'O') return ['cursor', ''];
  return ['', ''];
}
function height(row) {
  if (row === 13 || row === 22 || row === 24) return 'tall';
  if (row >= 12 && row <= 23) return 'mid';
  return row === 11 || row === 25 || row === 33 || row === 40 ? 'low' : '';
}
let html = '';
for (let r = 7; r <= 45; r++) {
  html += `<tr class="${height(r)}"><th class="${r === 30 ? 'cur' : ''}">${r}</th>`;
  for (let i = 0; i < 27; i++) {
    const [c, t] = cell(r, i);
    html += `<td class="${c}">${t}</td>`;
  }
  html += '</tr>';
}
document.getElementById('rows').innerHTML = html;

const text = (x, y, t, c = '') => `<text x="${x}" y="${y}" class="${c}">${t}</text>`;
const line = (x1, y1, x2, y2, s = '#dcdcdc') => `<path d="M${x1} ${y1}L${x2} ${y2}" stroke="${s}" stroke-width=".5"/>`;

// Sales in February: line chart with multi-level category axis
const fx = i => 16.500 + i * 12.800;
const fy = [37, 39, 39, 28, 39, 38, 39, 38, 37, 38];
let f = text(71, 10, 'SALES IN FEBRUARY', 'title') + '<rect x="10" y="27" width="129" height="13" fill="#e9e9e9"/>';
f += '<text transform="translate(6 40) rotate(-90)" class="start">Total Axis</text>';
f += `<polyline points="${fy.map((y, i) => fx(i) + ',' + y).join(' ')}" fill="none" stroke="#3f5fb5" stroke-width="1"/>`;
feb.slice(1).forEach((r, i) => {
  f += `<circle cx="${fx(i)}" cy="${fy[i]}" r=".8" fill="#2f4a9c"/>` + line(fx(i) - 6, 40, fx(i) - 6, 88);
  f += `<text transform="translate(${fx(i) + 1} 51) rotate(-90)">${r[4]}</text>`;
  f += text(fx(i), 73, r[3]) + text(fx(i), 80, r[2]) + text(fx(i), 87, r[1]);
});
document.getElementById('feb').innerHTML = f;

// Monthly totals: area chart
let a = '';
for (let m = 0; m <= 12; m += 2) {
  const y = 80.500 - m * 6.200;
  a += line(20, y, 136, y) + text(17, y + 1, m ? m + '.000.000' : '0', 'end');
}
const vals = [.66, .2, .4, 6.3, .42, .58, .34, .4, .81, .58, 0, 10.690];
a += `<polygon points="20,80.500 ${vals.map((v, i) => (20 + i * 10.500) + ',' + (80.500 - v * 6.200)).join(' ')} 135.500,80.500" fill="#4472c4"/>`;
vals.forEach((v, i) => { a += text(20 + i * 10.500, 86, i + 1); });
document.getElementById('area').innerHTML = a;

// Quantity pie
const stops = [0, 25, 50, 92, 135, 165, 203, 228, 268, 320, 360];
const fills = ['#4472c4', '#ed7d31', '#a5a5a5', '#ffc000', '#5b9bd5', '#70ad47', '#264478', '#9e480e', '#7b7b7b', '#8a6a10'];
const pt = d => `${71 + 15 * Math.sin(d * Math.PI / 180)} ${37 - 15 * Math.cos(d * Math.PI / 180)}`;
let q = text(71, 9, 'QTY', 'qty');
fills.forEach((c, i) => { q += `<path d="M71 37L${pt(stops[i])}A15 15 0 0 1 ${pt(stops[i + 1])}z" fill="${c}" stroke="#fff" stroke-width=".7"/>`; });
['STORM KREDIT', 'STORM KREDIT', 'VILLAEM KREDIT', 'CORE KREDIT', 'TRIPLE POWER KREDIT', 'TORNADO KREDIT', 'CINNAMON KREDIT', 'CORE KREDIT', 'NOBEL  KREDIT', 'VILLAEM KREDIT'].forEach((t, i) => {
  const x = 17 + (i % 3) * 37, y = 61 + Math.floor(i / 3) * 7;
  q += `<rect x="${x}" y="${y - 1.500}" width="1.500" height="1.500" fill="${fills[i]}"/>` + text(x + 3, y, t, 'start');
});
document.getElementById('qty').innerHTML = q;

// Sales in March: 3D columns
let c = text(71, 10, 'SALES CHART IN MARCH', 'title');
[2000, 1500, 1000, 500, 0].forEach((v, i) => {
  const y = 32 + i * 9;
  c += text(16, y + 1, v, 'end') + `<path d="M20 ${y}L24 ${y - 4}H132" fill="none" stroke="#dedede" stroke-width=".5"/>`;
});
[['STORM', 54], ['VILLAEM', 54], ['TRIPLE POWER', 56], ['CORE', 36]].forEach(([n, y], i) => {
  const x = 37 + i * 27;
  c += `<path d="M${x} ${y}h5v${66 - y}h-5z" fill="#a5a5a5"/><path d="M${x} ${y}l2-1.500h5l-2 1.500z" fill="#777"/><path d="M${x + 5} ${y}l2-1.500v${66 - y}l-2 1.500z" fill="#636363"/>`;
  c += text(x - 5, 72, n);
});
['#264478', '#ed7d31', '#a5a5a5'].forEach((s, i) => {
  c += `<rect x="${49 + i * 17}" y="79" width="2" height="2" fill="${s}"/>` + text(52 + i * 17, 81, 'Series' + (i + 1), 'start');
});
document.getElementById('mar').innerHTML = c;
```
